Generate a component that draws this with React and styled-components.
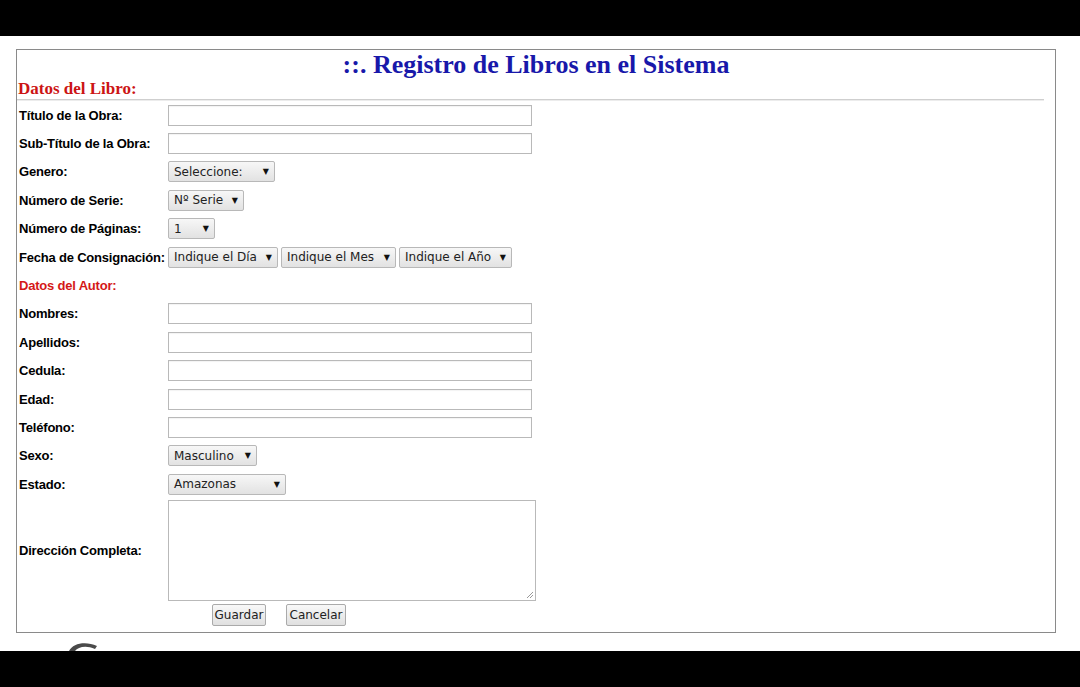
import React from "react";
import styled, { createGlobalStyle } from "styled-components";

const Global = createGlobalStyle`
  html, body { margin: 0; padding: 0; background: #000; }
  * { box-sizing: border-box; }
`;

const Screen = styled.div`
  width: 1080px;
  height: 687px;
  display: flex;
  flex-direction: column;
  background: #000;
  overflow: hidden;
`;

const Bar = styled.div`
  height: ${(p) => p.$h}px;
  background: #000;
  flex: none;
`;

const Page = styled.div`
  height: 615px;
  flex: none;
  background: #fff;
  padding: 13px 24px 0 16px;
  display: flex;
  flex-direction: column;
  overflow: hidden;
`;

const Box = styled.div`
  width: 1040px;
  height: 585px;
  border: 1px solid #8a8a8a;
  display: flex;
  flex-direction: column;
`;

const Title = styled.h1`
  margin: 0;
  height: 30px;
  line-height: 30px;
  text-align: center;
  font-family: "Liberation Serif", serif;
  font-weight: bold;
  font-size: 26px;
  color: #1818aa;
`;

const SectionSerif = styled.div`
  height: 18px;
  line-height: 18px;
  padding-left: 1px;
  font-family: "Liberation Serif", serif;
  font-weight: bold;
  font-size: 17px;
  color: #cc1414;
`;

const Rule = styled.div`
  margin: 1px 11px 0 0;
  height: 2px;
  border-top: 1px solid #cfcfcf;
  border-bottom: 1px solid #ececec;
`;

const Form = styled.div`
  display: grid;
  grid-template-columns: 151px 380px;
  grid-auto-rows: 28.4px;
  align-items: center;
`;

const Label = styled.div`
  padding-left: 2px;
  font-family: "Liberation Sans", Arial, sans-serif;
  font-weight: bold;
  font-size: 13px;
  letter-spacing: -0.2px;
  color: #000;
  white-space: nowrap;
`;

const SubHead = styled(Label)`
  grid-column: 1 / span 2;
  color: #d41818;
`;

const Field = styled.div`
  display: flex;
  gap: ${(p) => p.$gap || 0}px;
  align-items: center;
`;

const TextInput = styled.div`
  width: 364px;
  height: 21px;
  border: 1px solid #b9b9b9;
  background: #fff;
  box-shadow: inset 0 1px 1px rgba(0, 0, 0, 0.05);
`;

const Select = styled.div`
  width: ${(p) => p.$w}px;
  height: 21px;
  border: 1px solid #b8b8b8;
  border-radius: 2px;
  background: linear-gradient(#f7f7f7, #e2e2e2);
  display: flex;
  align-items: center;
  justify-content: space-between;
  padding: 0 5px 0 5px;
  font-family: "DejaVu Sans", sans-serif;
  font-size: 12px;
  color: #222;
  white-space: nowrap;
`;

const Arrow = styled.span`
  font-size: 8px;
  color: #111;
`;

const AreaRow = styled.div`
  height: 104px;
  display: grid;
  grid-template-columns: 151px 380px;
  align-items: center;
`;

const TextArea = styled.div`
  position: relative;
  width: 368px;
  height: 101px;
  border: 1px solid #b9b9b9;
  background: #fff;
`;

const Grip = styled.svg`
  position: absolute;
  right: 1px;
  bottom: 1px;
`;

const ButtonRow = styled.div`
  width: 524px;
  height: 25px;
  display: flex;
  justify-content: center;
  align-items: center;
  gap: 20px;
`;

const Button = styled.div`
  width: ${(p) => p.$w}px;
  height: 22px;
  border: 1px solid #aaa;
  border-radius: 2px;
  background: linear-gradient(#f8f8f8, #e0e0e0);
  display: flex;
  align-items: center;
  justify-content: center;
  font-family: "DejaVu Sans", sans-serif;
  font-size: 12px;
  color: #222;
`;

const Peek = styled.svg`
  margin: 9px 0 0 52px;
  display: block;
  flex: none;
`;

const Sel = ({ w, children }) => (
  <Select $w={w}>
    <span>{children}</span>
    <Arrow>▼</Arrow>
  </Select>
);

export default function App() {
  return (
    <Screen>
      <Global />
      <Bar $h={36} />
      <Page>
        <Box>
          <Title>::. Registro de Libros en el Sistema</Title>
          <SectionSerif>Datos del Libro:</SectionSerif>
          <Rule />
          <Form>
            <Label>Título de la Obra:</Label>
            <Field><TextInput /></Field>
            <Label>Sub-Título de la Obra:</Label>
            <Field><TextInput /></Field>
            <Label>Genero:</Label>
            <Field><Sel w={107}>Seleccione:</Sel></Field>
            <Label>Número de Serie:</Label>
            <Field><Sel w={76}>Nº Serie</Sel></Field>
            <Label>Número de Páginas:</Label>
            <Field><Sel w={47}>1</Sel></Field>
            <Label>Fecha de Consignación:</Label>
            <Field $gap={3}>
              <Sel w={110}>Indique el Día</Sel>
              <Sel w={115}>Indique el Mes</Sel>
              <Sel w={113}>Indique el Año</Sel>
            </Field>
            <SubHead>Datos del Autor:</SubHead>
            <Label>Nombres:</Label>
            <Field><TextInput /></Field>
            <Label>Apellidos:</Label>
            <Field><TextInput /></Field>
            <Label>Cedula:</Label>
            <Field><TextInput /></Field>
            <Label>Edad:</Label>
            <Field><TextInput /></Field>
            <Label>Teléfono:</Label>
            <Field><TextInput /></Field>
            <Label>Sexo:</Label>
            <Field><Sel w={89}>Masculino</Sel></Field>
            <Label>Estado:</Label>
            <Field><Sel w={118}>Amazonas</Sel></Field>
          </Form>
          <AreaRow>
            <Label>Dirección Completa:</Label>
            <TextArea>
              <Grip width="8" height="8" viewBox="0 0 8 8">
                <path d="M7 1 L1 7 M7 4 L4 7" stroke="#999" strokeWidth="1" />
              </Grip>
            </TextArea>
          </AreaRow>
          <ButtonRow>
            <Button $w={54}>Guardar</Button>
            <Button $w={60}>Cancelar</Button>
          </ButtonRow>
        </Box>
        <Peek width="30" height="9" viewBox="0 0 30 9">
          <path d="M1 9 C5 1, 18 -1, 29 4 L27 7 C18 3, 10 5, 7 9 Z" fill="#4a4a4a" />
        </Peek>
      </Page>
      <Bar $h={36} />
    </Screen>
  );
}
